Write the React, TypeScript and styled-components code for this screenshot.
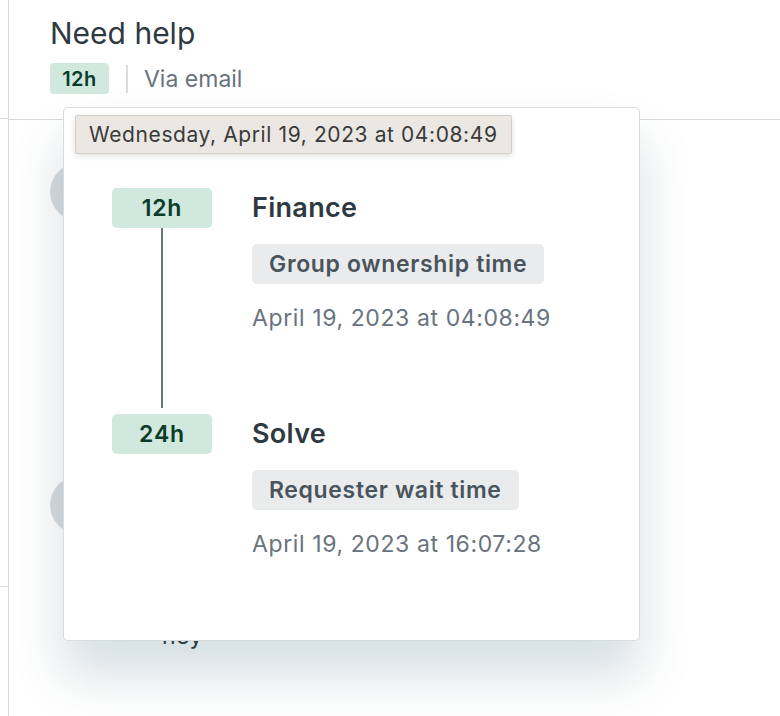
import React from 'react';
import styled, { createGlobalStyle } from 'styled-components';

const GlobalStyle = createGlobalStyle`
  html, body {
    margin: 0;
    padding: 0;
    background: #ffffff;
  }
  body {
    font-family: Inter, "Noto Sans", "Liberation Sans", sans-serif;
    color: #2f3941;
  }
`;

type Step = {
  sla: string;
  title: string;
  metric: string;
  date: string;
};

const steps: Step[] = [
  { sla: '12h', title: 'Finance', metric: 'Group ownership time', date: 'April 19, 2023 at 04:08:49' },
  { sla: '24h', title: 'Solve', metric: 'Requester wait time', date: 'April 19, 2023 at 16:07:28' },
];

export default function App() {
  return (
    <>
      <GlobalStyle />
      <Page>
        <SidePanel>
          <SideHead />
          <SideBlock />
        </SidePanel>

        <Main>
          <Header>
            <Title>Need help</Title>
            <Meta>
              <SlaBadge>12h</SlaBadge>
              <Divider />
              <Channel>Via email</Channel>
            </Meta>
          </Header>

          {/* messages sit under the popover; only avatars and the last line peek out */}
          <Conversation>
            <Message $gapAfter={255}>
              <Avatar />
            </Message>
            <Message $gapAfter={0}>
              <Avatar />
              <Body>
                <MessageText>hey</MessageText>
              </Body>
            </Message>
          </Conversation>
        </Main>

        <Popover>
          {steps.map((step, i) => {
            const last = i === steps.length - 1;
            return (
              <StepRow key={step.sla}>
                <Rail>
                  <RailBadge>{step.sla}</RailBadge>
                  {!last && <Connector />}
                </Rail>
                <StepBody $last={last}>
                  <StepTitle>{step.title}</StepTitle>
                  <MetricTag>{step.metric}</MetricTag>
                  <StepDate>{step.date}</StepDate>
                </StepBody>
              </StepRow>
            );
          })}
        </Popover>

        <NativeTooltip>Wednesday, April 19, 2023 at 04:08:49</NativeTooltip>
      </Page>
    </>
  );
}

const Page = styled.div`
  position: relative;
  display: flex;
  width: 780px;
  height: 716px;
  overflow: hidden;
  background: #ffffff;
`;

const SidePanel = styled.aside`
  width: 8px;
  flex-shrink: 0;
  border-right: 1px solid #d8dcde;
`;

const SideHead = styled.div`
  height: 118px;
  border-bottom: 1px solid #d8dcde;
`;

const SideBlock = styled.div`
  height: 467px;
  border-bottom: 1px solid #d8dcde;
`;

const Main = styled.main`
  flex: 1;
  display: flex;
  flex-direction: column;
`;

const Header = styled.header`
  box-sizing: border-box;
  height: 120px;
  padding: 13px 0 0 41px;
  border-bottom: 1px solid #d8dcde;
`;

const Title = styled.h1`
  margin: 0;
  font-size: 30px;
  line-height: 40px;
  font-weight: 400;
  color: #2f3941;
`;

const Meta = styled.div`
  display: flex;
  align-items: center;
  margin-top: 10px;
  height: 31px;
`;

const SlaBadge = styled.span`
  display: inline-flex;
  align-items: center;
  justify-content: center;
  box-sizing: border-box;
  width: 59px;
  height: 31px;
  border-radius: 4px;
  background: #d1e8df;
  color: #0b3b29;
  font-size: 20px;
  font-weight: 600;
  letter-spacing: 0.5px;
`;

const Divider = styled.span`
  width: 2px;
  height: 28px;
  margin: 0 16px 0 17px;
  background: #d8dcde;
`;

const Channel = styled.span`
  font-size: 23px;
  color: #68737d;
`;

const Conversation = styled.section`
  padding: 43px 41px 0;
`;

const Message = styled.article<{ $gapAfter: number }>`
  display: flex;
  gap: 54px;
  padding-bottom: ${(p) => p.$gapAfter}px;
`;

const Avatar = styled.div`
  width: 58px;
  height: 58px;
  flex-shrink: 0;
  border-radius: 50%;
  background: #d8dcde;
`;

const Body = styled.div`
  display: flex;
  flex-direction: column;
  padding-top: 144px;
`;

const MessageText = styled.p`
  margin: 0;
  font-size: 23px;
  line-height: 32px;
  color: #2f3941;
  letter-spacing: 0.5px;
`;

const Popover = styled.div`
  position: absolute;
  left: 63px;
  top: 107px;
  box-sizing: border-box;
  width: 577px;
  height: 534px;
  padding: 80px 0 0 48px;
  background: #ffffff;
  border: 1px solid #d8dcde;
  border-radius: 5px;
  box-shadow: 0 34px 52px 0 rgba(4, 68, 77, 0.17);
`;

const StepRow = styled.div`
  display: flex;
  gap: 40px;
`;

const Rail = styled.div`
  display: flex;
  flex-direction: column;
  align-items: center;
  width: 100px;
  flex-shrink: 0;
`;

const RailBadge = styled.span`
  display: flex;
  align-items: center;
  justify-content: center;
  width: 100px;
  height: 40px;
  border-radius: 5px;
  background: #d1e8df;
  color: #0b3b29;
  font-size: 23px;
  font-weight: 600;
  letter-spacing: 0.8px;
`;

const Connector = styled.span`
  flex: 1;
  width: 2px;
  margin-bottom: 6px;
  background: #68737d;
`;

const StepBody = styled.div<{ $last: boolean }>`
  display: flex;
  flex-direction: column;
  align-items: flex-start;
  padding-bottom: ${(p) => (p.$last ? 0 : 80)}px;
`;

const StepTitle = styled.h3`
  margin: 0;
  font-size: 27px;
  line-height: 40px;
  font-weight: 600;
  letter-spacing: 0.3px;
  color: #2f3941;
`;

const MetricTag = styled.span`
  margin-top: 16px;
  height: 40px;
  padding: 0 17px;
  border-radius: 5px;
  background: #e9ebed;
  color: #49545c;
  font-size: 23px;
  line-height: 40px;
  font-weight: 600;
  letter-spacing: 0.65px;
`;

const StepDate = styled.div`
  margin-top: 18px;
  font-size: 23px;
  line-height: 32px;
  letter-spacing: 0.6px;
  color: #68737d;
`;

const NativeTooltip = styled.div`
  position: absolute;
  left: 75px;
  top: 115px;
  padding: 6px 13px 5px;
  font-size: 21px;
  line-height: 26px;
  letter-spacing: 0.6px;
  color: #3a3a3a;
  background: #ebe8e4;
  border: 1px solid #d3cfca;
  border-radius: 2px;
  box-shadow: 0 2px 6px rgba(0, 0, 0, 0.12);
  white-space: nowrap;
`;
